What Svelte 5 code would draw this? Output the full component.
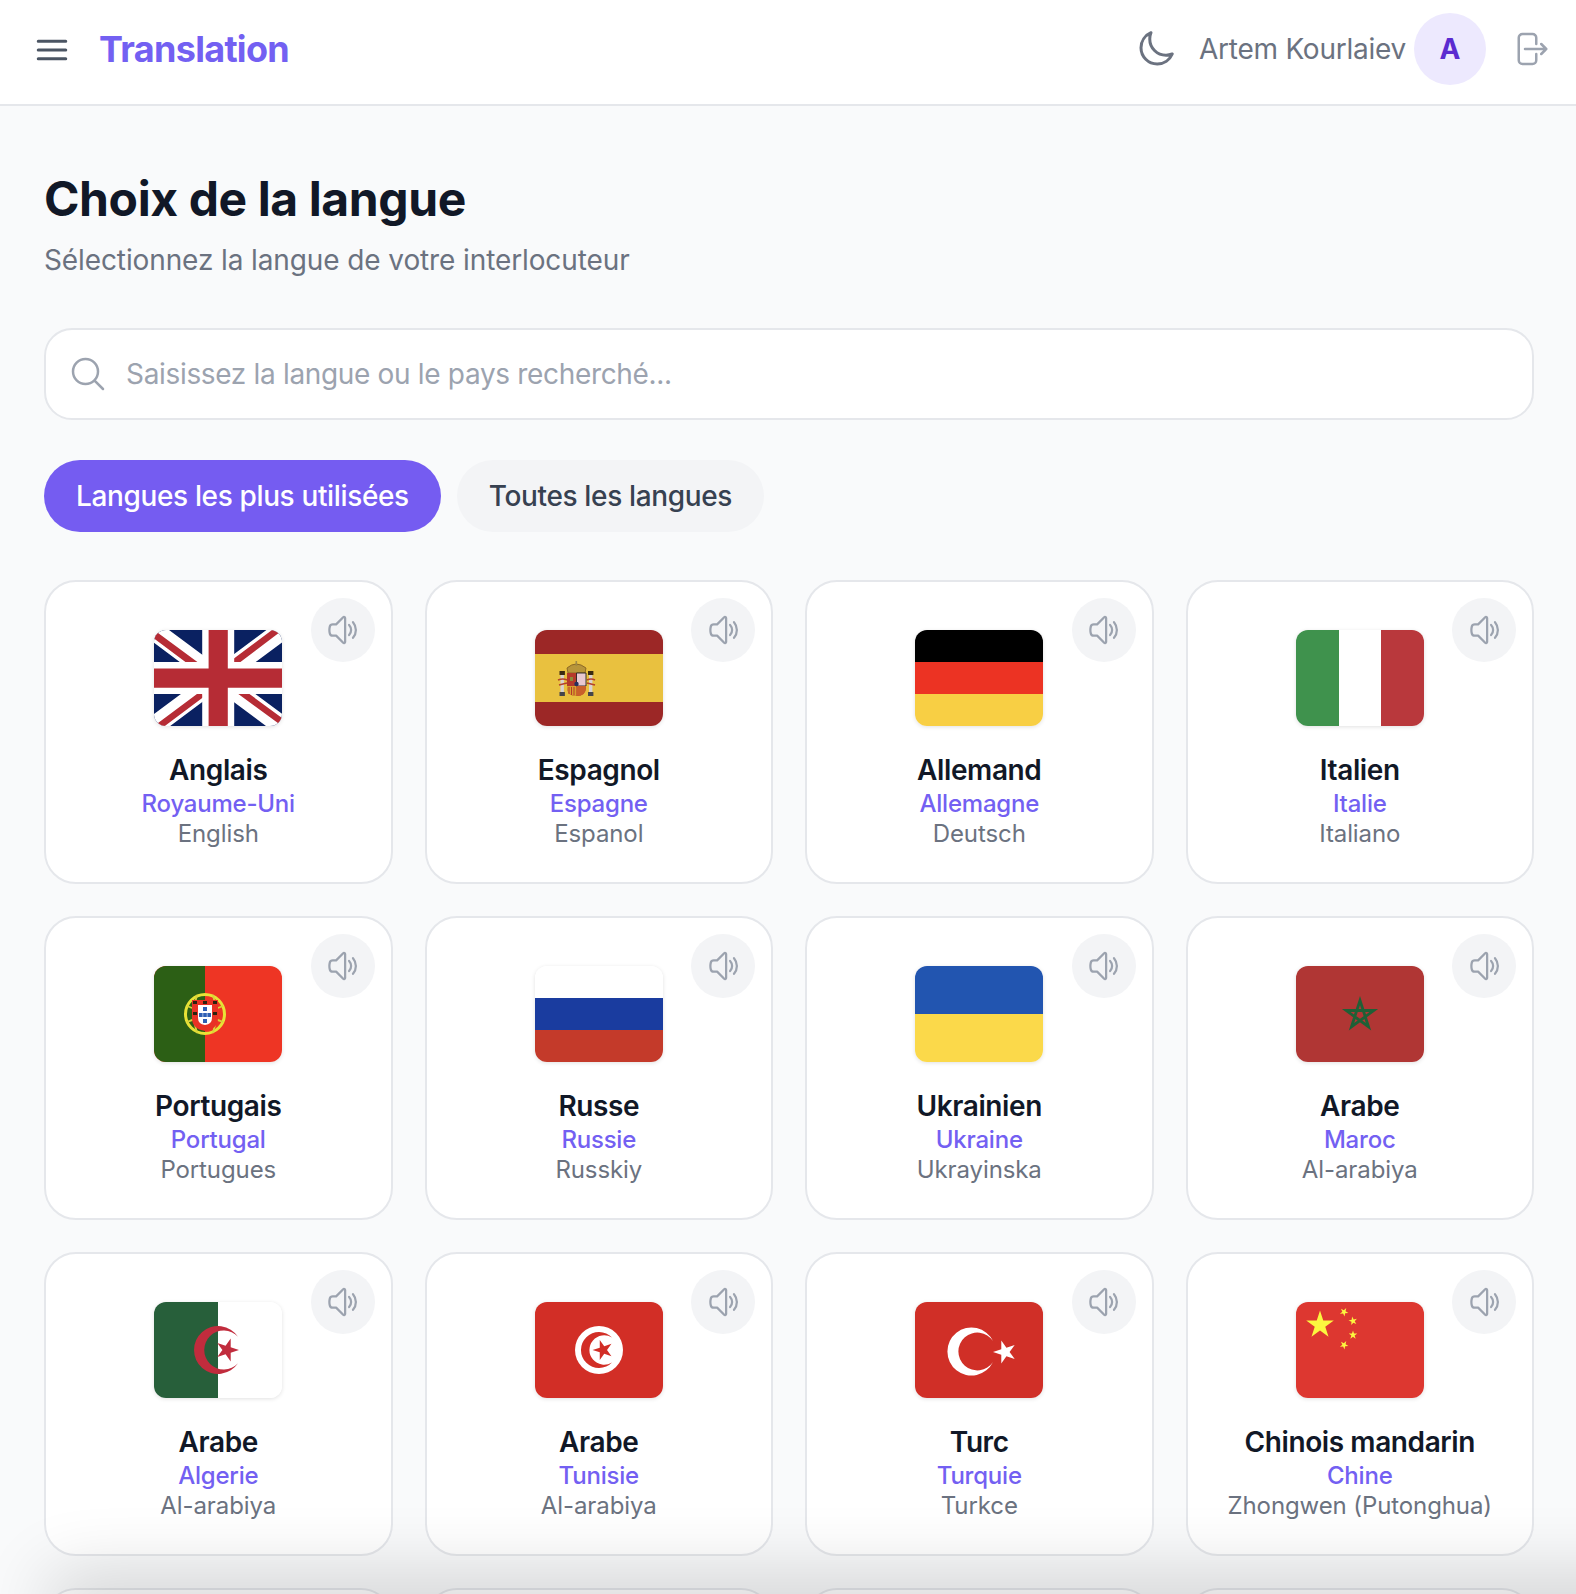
<script>
  const langs = [
    { flag: 'gb', name: 'Anglais', country: 'Royaume-Uni', native: 'English' },
    { flag: 'es', name: 'Espagnol', country: 'Espagne', native: 'Espanol' },
    { flag: 'de', name: 'Allemand', country: 'Allemagne', native: 'Deutsch' },
    { flag: 'it', name: 'Italien', country: 'Italie', native: 'Italiano' },
    { flag: 'pt', name: 'Portugais', country: 'Portugal', native: 'Portugues' },
    { flag: 'ru', name: 'Russe', country: 'Russie', native: 'Russkiy' },
    { flag: 'ua', name: 'Ukrainien', country: 'Ukraine', native: 'Ukrayinska' },
    { flag: 'ma', name: 'Arabe', country: 'Maroc', native: 'Al-arabiya' },
    { flag: 'dz', name: 'Arabe', country: 'Algerie', native: 'Al-arabiya' },
    { flag: 'tn', name: 'Arabe', country: 'Tunisie', native: 'Al-arabiya' },
    { flag: 'tr', name: 'Turc', country: 'Turquie', native: 'Turkce' },
    { flag: 'cn', name: 'Chinois mandarin', country: 'Chine', native: 'Zhongwen (Putonghua)' }
  ];

  function star(cx, cy, r, deg = -90) {
    const pts = [];
    for (let i = 0; i < 10; i++) {
      const rad = i % 2 ? r * 0.382 : r;
      const a = ((deg + i * 36) * Math.PI) / 180;
      pts.push(`${(cx + rad * Math.cos(a)).toFixed(2)},${(cy + rad * Math.sin(a)).toFixed(2)}`);
    }
    return pts.join(' ');
  }
  function penta(cx, cy, r) {
    const pts = [];
    for (let i = 0; i < 5; i++) {
      const a = ((-90 + i * 144) * Math.PI) / 180;
      pts.push(`${(cx + r * Math.cos(a)).toFixed(2)},${(cy + r * Math.sin(a)).toFixed(2)}`);
    }
    return pts.join(' ');
  }
</script>

<div class="page">
  <header class="topbar">
    <div class="brand">
      <svg class="menu" viewBox="0 0 24 24" fill="none" stroke="#4b5563" stroke-width="1.8" stroke-linecap="round" stroke-linejoin="round"><path d="M3.75 6.75h16.5M3.75 12h16.5m-16.5 5.25h16.5" /></svg>
      <span class="logo">Translation</span>
    </div>
    <div class="user">
      <svg class="moon" viewBox="0 0 24 24" fill="none" stroke="#6b7280" stroke-width="1.8" stroke-linecap="round" stroke-linejoin="round"><path d="M21.752 15.002A9.718 9.718 0 0118 15.75c-5.385 0-9.75-4.365-9.75-9.75 0-1.33.266-2.597.748-3.752A9.753 9.753 0 003 11.25C3 16.635 7.365 21 12.75 21a9.753 9.753 0 009.002-5.998z" /></svg>
      <span class="username">Artem Kourlaiev</span>
      <span class="avatar">A</span>
      <svg class="logout" viewBox="0 0 24 24" fill="none" stroke="#9ca3af" stroke-width="1.5" stroke-linecap="round" stroke-linejoin="round"><path d="M15.75 9V5.25A2.25 2.25 0 0013.5 3h-6a2.25 2.25 0 00-2.25 2.25v13.5A2.25 2.25 0 007.5 21h6a2.25 2.25 0 002.25-2.25V15m3 0l3-3m0 0l-3-3m3 3H9" /></svg>
    </div>
  </header>

  <main class="content">
    <h1>Choix de la langue</h1>
    <p class="sub">Sélectionnez la langue de votre interlocuteur</p>

    <div class="search">
      <svg viewBox="0 0 24 24" fill="none" stroke="#9ca3af" stroke-width="1.5" stroke-linecap="round" stroke-linejoin="round"><path d="M21 21l-5.197-5.197m0 0A7.5 7.5 0 105.196 5.196a7.5 7.5 0 0010.607 10.607z" /></svg>
      <span>Saisissez la langue ou le pays recherché...</span>
    </div>

    <div class="tabs">
      <button class="tab active">Langues les plus utilisées</button>
      <button class="tab">Toutes les langues</button>
    </div>

    <div class="grid">
      {#each langs as l}
        <article class="card">
          <span class="speak">
            <svg viewBox="0 0 24 24" fill="none" stroke="#9ca3af" stroke-width="1.5" stroke-linecap="round" stroke-linejoin="round"><path d="M18 6.8a8 8 0 010 10.4M15.4 8.6a5 5 0 010 6.8M6.75 8.25l4.72-4.72a.75.75 0 011.28.53v15.88a.75.75 0 01-1.28.53l-4.72-4.72H4.51c-.88 0-1.704-.507-1.938-1.354A9.01 9.01 0 012.25 12c0-.83.112-1.633.322-2.396C2.806 8.756 3.63 8.25 4.51 8.25H6.75z" /></svg>
          </span>
          <svg class="flag" viewBox="0 0 128 96">
            {#if l.flag === 'gb'}
              <g transform="scale(0.2)">
                <path fill="#0a2161" d="M0 0h640v480H0z" />
                <path fill="#fff" d="m75 0 244 181L562 0h78v62L400 241l240 178v61h-80L320 301 81 480H0v-60l239-178L0 64V0z" />
                <path fill="#b62c35" d="m424 281 216 159v40L369 281zm-184 20 6 35L54 480H0zM640 0v3L391 191l2-44L590 0zM0 0l239 176h-60L0 42z" />
                <path fill="#fff" d="M241 0v480h160V0zM0 160v160h640V160z" />
                <path fill="#b62c35" d="M0 193v96h640v-96zM273 0v480h96V0z" />
              </g>
            {:else if l.flag === 'es'}
              <rect width="128" height="96" fill="#9c2726" />
              <rect y="24" width="128" height="48" fill="#e9c13f" />
              <path d="M32 38q9-8 19 0l-1 5H33z" fill="#b8953a" stroke="#7d5b20" stroke-width=".8" />
              <rect x="40.5" y="31" width="1.6" height="5" fill="#a08a45" />
              <rect x="25.5" y="44" width="3.4" height="18" fill="#d8d3d0" />
              <rect x="24.5" y="41" width="5.4" height="4" fill="#3a2a10" />
              <rect x="24.5" y="62" width="5.4" height="4" fill="#46464a" />
              <rect x="54" y="44" width="3.4" height="18" fill="#d8d3d0" />
              <rect x="53" y="41" width="5.4" height="4" fill="#3a2a10" />
              <rect x="53" y="62" width="5.4" height="4" fill="#46464a" />
              <path d="M23 50q5-2 9 0M60 50q-4-2-8 0M24 55l8-2M60 55l-8-2" stroke="#b4412a" stroke-width="1.6" fill="none" />
              <path d="M32 43h19v14q0 9-9.5 9T32 57z" fill="#b5392a" />
              <path d="M41.5 43H51v13h-9.500z" fill="#e8c8d0" stroke="#222" stroke-width=".9" />
              <path d="M32 56h9.500v10Q32 66 32 57z" fill="#d8a12e" />
              <path d="M34 57v7M36.500 57v8M39 57v8" stroke="#b5392a" stroke-width="1" />
              <path d="M41.500 56H51v1q0 9-9.500 9z" fill="#c9602a" />
              <circle cx="41.500" cy="54" r="2.200" fill="#24305e" />
              <rect x="35" y="47" width="3" height="4" fill="#8c8a3a" />
            {:else if l.flag === 'de'}
              <rect width="128" height="32" fill="#000" />
              <rect y="32" width="128" height="32" fill="#ec3323" />
              <rect y="64" width="128" height="32" fill="#f8cf44" />
            {:else if l.flag === 'it'}
              <rect width="43" height="96" fill="#3f924d" />
              <rect x="43" width="42" height="96" fill="#fff" />
              <rect x="85" width="43" height="96" fill="#b9383c" />
            {:else if l.flag === 'pt'}
              <rect width="128" height="96" fill="#ee3524" />
              <rect width="51" height="96" fill="#2c5f15" />
              <circle cx="51" cy="48" r="19.500" fill="none" stroke="#e8e236" stroke-width="3" />
              <path d="M33 40q18 8 36 0M33 56q18-8 36 0M43 29q-6 19 0 38M59 29q6 19 0 38" fill="none" stroke="#d8d23a" stroke-width="1.800" />
              <path d="M38 34h26v18q0 11-13 13-13-2-13-13z" fill="#e83225" />
              <path d="M44 39h14v13q0 6-7 7-7-1-7-7z" fill="#fff" />
              <g fill="#2f5fb5"><rect x="49" y="41" width="4" height="4" /><rect x="45" y="47" width="3.600" height="4" /><rect x="49.200" y="47" width="3.600" height="4" /><rect x="53.400" y="47" width="3.600" height="4" /><rect x="49" y="53" width="4" height="4" /></g>
              <g fill="#2a2210"><rect x="39" y="35" width="4" height="3" /><rect x="49" y="35" width="4" height="3" /><rect x="59" y="35" width="4" height="3" /><rect x="39" y="46" width="4" height="3" /><rect x="59" y="46" width="4" height="3" /></g>
            {:else if l.flag === 'ru'}
              <rect width="128" height="32" fill="#fff" />
              <rect y="32" width="128" height="32" fill="#1a3c9f" />
              <rect y="64" width="128" height="32" fill="#c43a2a" />
            {:else if l.flag === 'ua'}
              <rect width="128" height="48" fill="#2255b0" />
              <rect y="48" width="128" height="48" fill="#fbd94a" />
            {:else if l.flag === 'ma'}
              <rect width="128" height="96" fill="#b03634" />
              <polygon points={penta(64, 49, 14.500)} fill="none" stroke="#1f6036" stroke-width="2.800" stroke-linejoin="miter" />
            {:else if l.flag === 'dz'}
              <rect width="128" height="96" fill="#fff" />
              <rect width="64" height="96" fill="#275f3a" />
              <path d="M84 34.700A24 24 0 1 0 84 61.300A19.500 19.500 0 1 1 84 34.700z" fill="#c12c3d" />
              <polygon points={star(73, 48, 12, 0)} fill="#c12c3d" />
            {:else if l.flag === 'tn'}
              <rect width="128" height="96" fill="#d22e26" />
              <circle cx="64" cy="48" r="24" fill="#fff" />
              <path d="M77 35.600A18 18 0 1 0 77 60.400A14.700 14.700 0 1 1 77 35.600z" fill="#d22e26" />
              <polygon points={star(68, 48, 10.500, 180)} fill="#d22e26" />
            {:else if l.flag === 'tr'}
              <rect width="128" height="96" fill="#d02f27" />
              <path d="M78 39A24 24 0 1 0 78 60A18.900 18.900 0 1 1 78 39z" fill="#fff" />
              <polygon points={star(90, 50, 12, 180)} fill="#fff" />
            {:else if l.flag === 'cn'}
              <rect width="128" height="96" fill="#dd3730" />
              <polygon points={star(24, 23, 14.500)} fill="#fcf63f" />
              <polygon points={star(48, 10, 4.500, -60)} fill="#fcf63f" />
              <polygon points={star(57, 19, 4.500, -30)} fill="#fcf63f" />
              <polygon points={star(57, 33, 4.500, -90)} fill="#fcf63f" />
              <polygon points={star(48, 43, 4.500, -60)} fill="#fcf63f" />
            {/if}
          </svg>
          <h2>{l.name}</h2>
          <p class="country">{l.country}</p>
          <p class="native">{l.native}</p>
        </article>
      {/each}
      <article class="card"></article>
      <article class="card"></article>
      <article class="card"></article>
      <article class="card"></article>
    </div>
  </main>
  <div class="edge"></div>
</div>

<style>
  :global(html), :global(body) {
    margin: 0;
    height: 1594px;
    overflow: hidden;
    background: #f9fafb;
  }
  .page {
    height: 1594px;
    overflow: hidden;
    position: relative;
    font-family: Inter, "Noto Sans", sans-serif;
    color: #111827;
  }
  .topbar {
    height: 98px;
    box-sizing: content-box;
    border-bottom: 2px solid #e5e7eb;
    background: #fff;
    display: flex;
    align-items: center;
    justify-content: space-between;
    padding: 0 26px 6px 32px;
  }
  .brand, .user { display: flex; align-items: center; }
  .menu { width: 40px; height: 40px; margin-top: 2px; }
  .logo {
    margin-left: 27px;
    font-size: 36px;
    font-weight: 700;
    color: #7360f2;
    letter-spacing: -0.7px;
  }
  .moon { width: 40px; height: 40px; margin-right: 23px; }
  .username { font-size: 28px; color: #6b7280; margin-right: 8px; letter-spacing: -0.25px; }
  .avatar {
    width: 72px;
    height: 72px;
    border-radius: 50%;
    background: #ede9fe;
    color: #5b2bd0;
    font-size: 28px;
    font-weight: 700;
    display: flex;
    align-items: center;
    justify-content: center;
    margin-right: 24px;
  }
  .logout { width: 40px; height: 40px; }
  .content { padding: 63px 42px 0 44px; }
  h1 {
    margin: 0;
    font-size: 48px;
    line-height: 60px;
    font-weight: 700;
    letter-spacing: -0.4px;
  }
  .sub {
    margin: 13px 0 0;
    font-size: 28px;
    line-height: 36px;
    color: #6b7280;
    letter-spacing: -0.11px;
  }
  .search {
    margin-top: 50px;
    height: 92px;
    box-sizing: border-box;
    border: 2px solid #e5e7eb;
    border-radius: 28px;
    background: #fff;
    display: flex;
    align-items: center;
    padding-left: 22px;
    gap: 18px;
    font-size: 28px;
    color: #9ca3af;
    letter-spacing: -0.33px;
  }
  .search svg { width: 40px; height: 40px; }
  .tabs { display: flex; gap: 16px; margin-top: 40px; }
  .tab {
    height: 72px;
    border: 0;
    border-radius: 36px;
    padding: 0 32px;
    font: 500 28px Inter, "Noto Sans", sans-serif;
    letter-spacing: -0.36px;
    background: #f3f4f6;
    color: #374151;
  }
  .tab.active { background: #755cf1; color: #fff; }
  .grid {
    margin-top: 48px;
    display: grid;
    grid-template-columns: repeat(4, 1fr);
    grid-auto-rows: 304px;
    gap: 32px;
  }
  .card {
    position: relative;
    box-sizing: border-box;
    background: #fff;
    border: 2px solid #e5e7eb;
    border-radius: 32px;
    padding-top: 48px;
    text-align: center;
  }
  .speak {
    position: absolute;
    top: 16px;
    right: 16px;
    width: 64px;
    height: 64px;
    border-radius: 50%;
    background: #f3f4f6;
    display: flex;
    align-items: center;
    justify-content: center;
  }
  .speak svg { width: 36px; height: 36px; margin-left: 3px; }
  .flag {
    display: block;
    width: 128px;
    height: 96px;
    margin: 0 auto;
    border-radius: 12px;
    box-shadow: 0 1px 4px rgba(0, 0, 0, 0.12);
  }
  h2 {
    margin: 25px 0 0;
    font-size: 28px;
    line-height: 39px;
    font-weight: 600;
    letter-spacing: -0.4px;
  }
  .country {
    margin: 0;
    font-size: 24px;
    line-height: 28px;
    font-weight: 500;
    color: #7360f2;
    letter-spacing: -0.22px;
  }
  .native {
    margin: 0;
    font-size: 24px;
    line-height: 32px;
    color: #6b7280;
    letter-spacing: -0.1px;
  }
  .edge {
    position: absolute;
    left: 70px;
    right: -80px;
    bottom: -30px;
    height: 30px;
    box-shadow: 0 0 70px 20px rgba(0, 0, 0, 0.16);
    pointer-events: none;
  }
</style>
